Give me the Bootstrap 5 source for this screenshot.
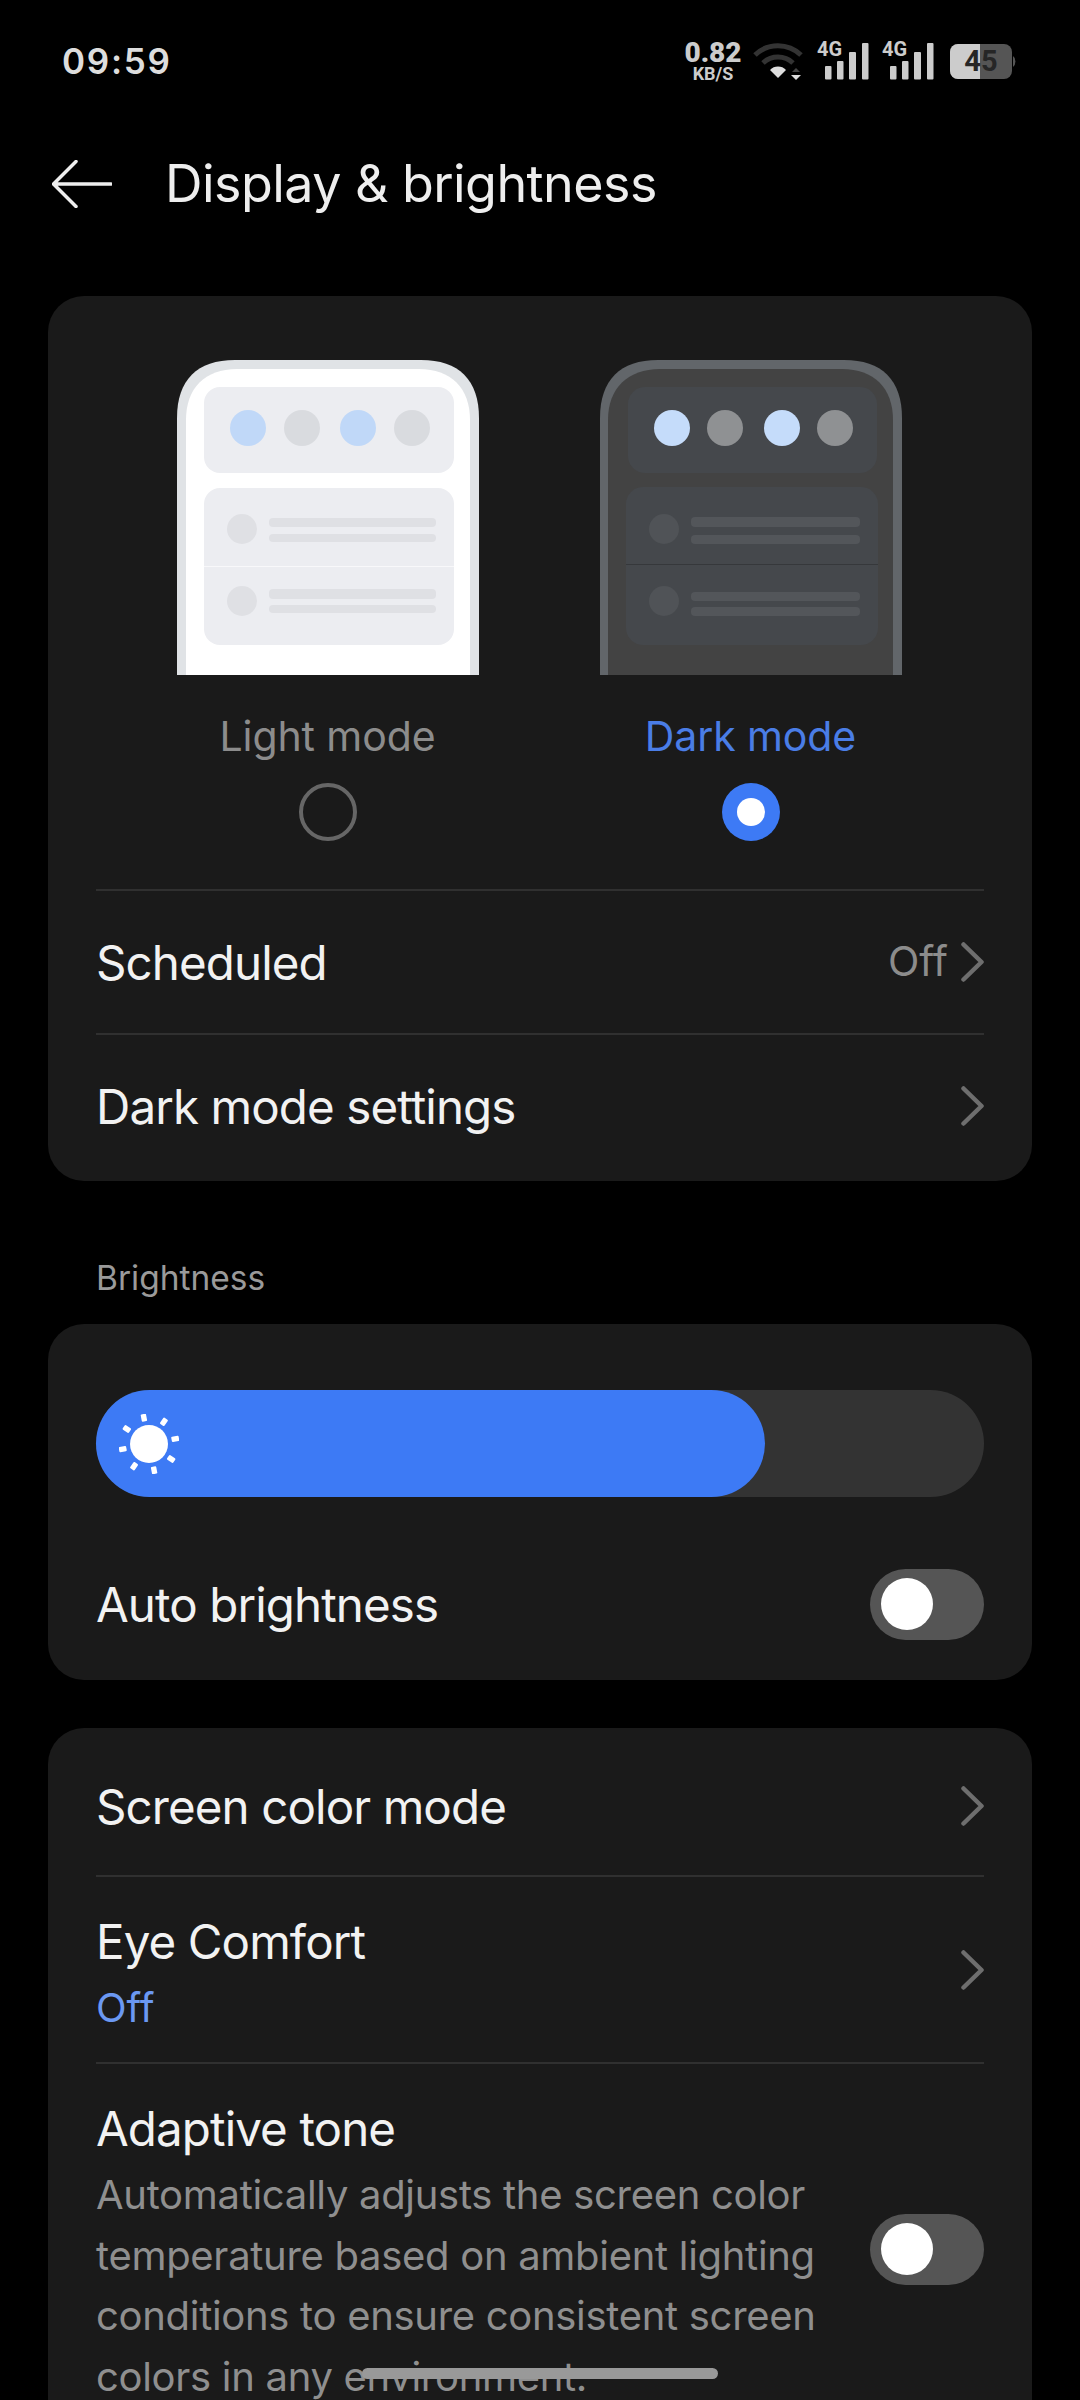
<!DOCTYPE html>
<html lang="en">

<head>
	<meta charset="utf-8">
	<meta name="viewport" content="width=device-width,initial-scale=1">
	<title>Display &amp; brightness</title>
	<link href="https://cdn.jsdelivr.net/npm/bootstrap@5.3.5/dist/css/bootstrap.min.css" rel="stylesheet">
	<style>
		html, body { background: #000; }
		body { font-family: Inter, "Noto Sans", sans-serif; color: #f0f0f0; }
		.screen { width: 1080px; height: 2400px; overflow: hidden; position: relative; background: #000; }

		.statusbar { height: 122px; padding: 0 64px 0 62px; }
		.clock { font-size: 35px; font-weight: 600; color: #ddd; letter-spacing: 1.7px; }
		.net-speed { width: 60px; margin-right: 9px; text-align: center; font-family: Roboto, sans-serif; font-weight: 700; color: #ccc; }
		.net-speed b { display: block; font-size: 28px; line-height: 26px; }
		.net-speed i { display: block; font-size: 18px; line-height: 16px; font-style: normal; }
		.sig { position: relative; width: 52px; height: 38px; margin-left: 13px; }
		.sig svg { display: block; }
		.sig span { position: absolute; left: 0; top: -4px; font: 700 20px/22px Roboto, sans-serif; color: #ccc; }
		.batt { position: relative; width: 66px; height: 35px; margin-left: 16px; }
		.batt svg { display: block; }
		.batt-num { position: absolute; left: 0; top: 0; width: 62px; text-align: center; font: 700 29px/35px Roboto, sans-serif; color: #262626; }

		.titlebar { height: 124px; padding: 0 0 0 52px; margin-bottom: 50px; }
		.titlebar h1 { font-size: 52px; font-weight: 400; margin: 0 0 0 53px; color: #eee; letter-spacing: -.55px; }

		.card.pane { background: #1a1a1a; border: 0; border-radius: 36px; margin: 0 48px; padding: 0 48px; color: #f0f0f0; }
		.pane-modes { height: 885px; }
		.pane-bright { height: 356px; }
		.card.pane.pane-more { height: 800px; margin-top: 48px; }

		.previews { padding: 64px 21px 0 20px; }
		.mode-col { width: 423px; }
		.mode-col svg { display: block; }
		.mode-label { font-size: 41px; line-height: 48px; margin-top: 37px; color: #8c8c8c; letter-spacing: -.1px; }
		.mode-label.on { color: #4a7de6; }
		.radio-dot { width: 58px; height: 58px; border-radius: 50%; border: 4px solid #666; margin-top: 23px; }
		.radio-dot.on { border: 0; background: #3d7af5; }
		.radio-dot.on::after { content: ""; width: 28px; height: 28px; background: #fff; border-radius: 50%; }
		.line-row { border-top: 2px solid #303030; }
		.line-row.first { margin-top: 48px; }
		.row-h { height: 144px; }
		.row-title { font-size: 47.500px; line-height: 56px; font-weight: 400; color: #f2f2f2; letter-spacing: -.9px; padding-top: 2px; }
		.row-value { font-size: 41px; color: #8c8c8c; margin-right: 13px; }
		.row-sub { font-size: 40px; line-height: 50px; color: #6b98f2; margin-top: 13px; }
		.chev { display: block; flex: none; }

		.section-cap { font-size: 33.500px; line-height: 40px; color: #9a9a9a; margin: 77px 0 26px 96px; height: 40px; }

		.slider-track { height: 107px; border-radius: 54px; background: #333; margin-top: 66px; }
		.slider-fill { height: 107px; border-radius: 54px; background: #3d7af5; padding-left: 23px; }
		.tgl { width: 114px; height: 71px; border-radius: 36px; background: #555; padding-left: 11px; flex: none; }
		.tgl::before { content: ""; width: 52px; height: 52px; border-radius: 50%; background: #fff; }
		.auto-row { height: 142px; margin-top: 36px; }

		.row-first { padding-top: 9px; box-sizing: content-box; height: 138px; }
		.row-eye { height: 187px; }
		.eye-text { padding-top: 6px; }
		.note-row { padding-top: 35px; }
		.note-text { font-size: 40px; line-height: 60.500px; color: #8f8f8f; width: 740px; letter-spacing: -.3px; margin-top: 8px; }
		.note-row .tgl { margin-bottom: 8px; }
		.home-pill { position: absolute; left: 362px; top: 2368px; width: 356px; height: 11px; border-radius: 6px; background: #999; }
	</style>
</head>

<body>
	<div class="screen">
		<div class="statusbar d-flex align-items-center justify-content-between">
			<div class="clock">09:59</div>
			<div class="d-flex align-items-center">
				<div class="net-speed"><b>0.82</b><i>KB/S</i></div>
				<svg width="52" height="38" viewBox="0 0 52 38" fill="none">
					<path d="M3 13 A33 33 0 0 1 49 13" stroke="#333" stroke-width="5"/>
					<path d="M11 21 A22 22 0 0 1 41 21" stroke="#333" stroke-width="5"/>
					<path d="M18 28 L26 36 L34 28 A11 11 0 0 0 18 28Z" fill="#ddd"/>
					<path d="M39 33h10l-5 5z" fill="#ddd"/><path d="M40 30l4-4 4 4z" fill="#444"/>
				</svg>
				<div class="sig">
					<svg width="52" height="38" viewBox="0 0 52 38" fill="#ccc"><rect x="8" y="24" width="6.500" height="13.500" rx="1"/><rect x="20" y="19" width="6.500" height="18.500" rx="1"/><rect x="32" y="10" width="7" height="27.500" rx="1"/><rect x="45" y="1" width="6.500" height="36.500" rx="1"/></svg>
					<span>4G</span>
				</div>
				<div class="sig">
					<svg width="52" height="38" viewBox="0 0 52 38" fill="#ccc"><rect x="8" y="24" width="6.500" height="13.500" rx="1"/><rect x="20" y="19" width="6.500" height="18.500" rx="1"/><rect x="32" y="10" width="7" height="27.500" rx="1"/><rect x="45" y="1" width="6.500" height="36.500" rx="1"/></svg>
					<span>4G</span>
				</div>
				<div class="batt">
					<svg width="66" height="35" viewBox="0 0 66 35">
						<rect x="0" y="0" width="62" height="35" rx="8" fill="#555"/>
						<path d="M8 0H30V35H8A8 8 0 0 1 0 27V8A8 8 0 0 1 8 0Z" fill="#ccc"/>
						<path d="M63 12a4 6 0 0 1 0 11z" fill="#555"/>
					</svg>
					<span class="batt-num">45</span>
				</div>
			</div>
		</div>

		<div class="titlebar d-flex align-items-center">
			<svg width="60" height="48" viewBox="0 0 60 48" fill="none" stroke="#eee" stroke-width="3.500" stroke-linecap="round" stroke-linejoin="round">
				<path d="M59 24H2M24 1.500 1.500 24 24 46.500"/>
			</svg>
			<h1>Display &amp; brightness</h1>
		</div>

		<div class="card pane pane-modes">
			<div class="previews d-flex">
				<div class="mode-col d-flex flex-column align-items-center">
					<svg width="302" height="315" viewBox="0 0 302 315">
						<path d="M0 315V58C0 20 20 0 58 0H244C282 0 302 20 302 58V315Z" fill="#e0e3e6"/>
						<path d="M9 315V60C9 28 28 9 60 9H242C274 9 293 28 293 60V315Z" fill="#fff"/>
						<rect x="27" y="27" width="250" height="86" rx="16" fill="#ecedf1"/>
						<circle cx="71" cy="68" r="18" fill="#c0d8f8"/><circle cx="125" cy="68" r="18" fill="#d9dbdf"/><circle cx="181" cy="68" r="18" fill="#c0d8f8"/><circle cx="235" cy="68" r="18" fill="#d9dbdf"/>
						<rect x="27" y="128" width="250" height="157" rx="16" fill="#ecedf1"/>
						<rect x="27" y="206" width="250" height="1" fill="#f8f8fa"/>
						<circle cx="65" cy="169" r="15" fill="#dfe0e4"/>
						<rect x="92" y="158" width="167" height="9" rx="4" fill="#dfe0e4"/><rect x="92" y="174" width="167" height="8" rx="4" fill="#dfe0e4"/>
						<circle cx="65" cy="241" r="15" fill="#dfe0e4"/>
						<rect x="92" y="229" width="167" height="10" rx="4" fill="#dfe0e4"/><rect x="92" y="245" width="167" height="8" rx="4" fill="#dfe0e4"/>
					</svg>
					<div class="mode-label">Light mode</div>
					<div class="radio-dot"></div>
				</div>
				<div class="mode-col d-flex flex-column align-items-center">
					<svg width="302" height="315" viewBox="0 0 302 315">
						<path d="M0 315V58C0 20 20 0 58 0H244C282 0 302 20 302 58V315Z" fill="#62666a"/>
						<path d="M8 315V60C8 28 28 9 60 9H242C274 9 293 28 293 60V315Z" fill="#434343"/>
						<rect x="28" y="27" width="249" height="86" rx="17" fill="#45484c"/>
						<circle cx="72" cy="68" r="18" fill="#c5dcfa"/><circle cx="125" cy="68" r="18" fill="#8f9193"/><circle cx="182" cy="68" r="18" fill="#c5dcfa"/><circle cx="235" cy="68" r="18" fill="#8f9193"/>
						<rect x="26" y="127" width="252" height="158" rx="17" fill="#45484c"/>
						<rect x="26" y="204" width="252" height="1" fill="#36383b"/>
						<circle cx="64" cy="169" r="15" fill="#505357"/>
						<rect x="91" y="157" width="169" height="10" rx="4" fill="#53565a"/><rect x="91" y="175" width="169" height="9" rx="4" fill="#53565a"/>
						<circle cx="64" cy="241" r="15" fill="#505357"/>
						<rect x="91" y="232" width="169" height="9" rx="4" fill="#53565a"/><rect x="91" y="247" width="169" height="9" rx="4" fill="#53565a"/>
					</svg>
					<div class="mode-label on">Dark mode</div>
					<div class="radio-dot on d-flex align-items-center justify-content-center"></div>
				</div>
			</div>

			<div class="line-row first row-h d-flex align-items-center justify-content-between">
				<span class="row-title">Scheduled</span>
				<span class="d-flex align-items-center">
					<span class="row-value">Off</span>
					<svg class="chev" width="23" height="40" viewBox="0 0 23 40" fill="none" stroke="#6e6e6e" stroke-width="4.500" stroke-linecap="round" stroke-linejoin="round"><path d="M2.500 2.500 20.500 20 2.500 37.500"/></svg>
				</span>
			</div>
			<div class="line-row row-h d-flex align-items-center justify-content-between">
				<span class="row-title">Dark mode settings</span>
				<svg class="chev" width="23" height="40" viewBox="0 0 23 40" fill="none" stroke="#6e6e6e" stroke-width="4.500" stroke-linecap="round" stroke-linejoin="round"><path d="M2.500 2.500 20.500 20 2.500 37.500"/></svg>
			</div>
		</div>

		<div class="section-cap">Brightness</div>

		<div class="card pane pane-bright">
			<div class="slider-track">
				<div class="slider-fill d-flex align-items-center" style="width: 669px">
					<svg width="60" height="60" viewBox="-30 -30 60 60" fill="#fff">
						<circle r="19"/>
						<rect x="-2.700" y="-30.500" width="5.400" height="7.500" rx="1" transform="rotate(-11)"/>
						<rect x="-2.700" y="-30.500" width="5.400" height="7.500" rx="1" transform="rotate(34)"/>
						<rect x="-2.700" y="-30.500" width="5.400" height="7.500" rx="1" transform="rotate(79)"/>
						<rect x="-2.700" y="-30.500" width="5.400" height="7.500" rx="1" transform="rotate(124)"/>
						<rect x="-2.700" y="-30.500" width="5.400" height="7.500" rx="1" transform="rotate(169)"/>
						<rect x="-2.700" y="-30.500" width="5.400" height="7.500" rx="1" transform="rotate(214)"/>
						<rect x="-2.700" y="-30.500" width="5.400" height="7.500" rx="1" transform="rotate(259)"/>
						<rect x="-2.700" y="-30.500" width="5.400" height="7.500" rx="1" transform="rotate(304)"/>
					</svg>
				</div>
			</div>
			<div class="auto-row d-flex align-items-center justify-content-between">
				<span class="row-title">Auto brightness</span>
				<span class="tgl d-flex align-items-center"></span>
			</div>
		</div>

		<div class="card pane pane-more">
			<div class="row-first d-flex align-items-center justify-content-between">
				<span class="row-title">Screen color mode</span>
				<svg class="chev" width="23" height="40" viewBox="0 0 23 40" fill="none" stroke="#6e6e6e" stroke-width="4.500" stroke-linecap="round" stroke-linejoin="round"><path d="M2.500 2.500 20.500 20 2.500 37.500"/></svg>
			</div>
			<div class="line-row row-eye d-flex align-items-center justify-content-between">
				<div class="eye-text">
					<div class="row-title">Eye Comfort</div>
					<div class="row-sub">Off</div>
				</div>
				<svg class="chev" width="23" height="40" viewBox="0 0 23 40" fill="none" stroke="#6e6e6e" stroke-width="4.500" stroke-linecap="round" stroke-linejoin="round"><path d="M2.500 2.500 20.500 20 2.500 37.500"/></svg>
			</div>
			<div class="line-row note-row d-flex align-items-center justify-content-between">
				<div>
					<div class="row-title">Adaptive tone</div>
					<div class="note-text">Automatically adjusts the screen color temperature based on ambient lighting conditions to ensure consistent screen colors in any environment.</div>
				</div>
				<span class="tgl d-flex align-items-center"></span>
			</div>
		</div>

		<div class="home-pill"></div>
	</div>

	<script src="https://cdn.jsdelivr.net/npm/bootstrap@5.3.5/dist/js/bootstrap.bundle.min.js"></script>
</body>

</html>
